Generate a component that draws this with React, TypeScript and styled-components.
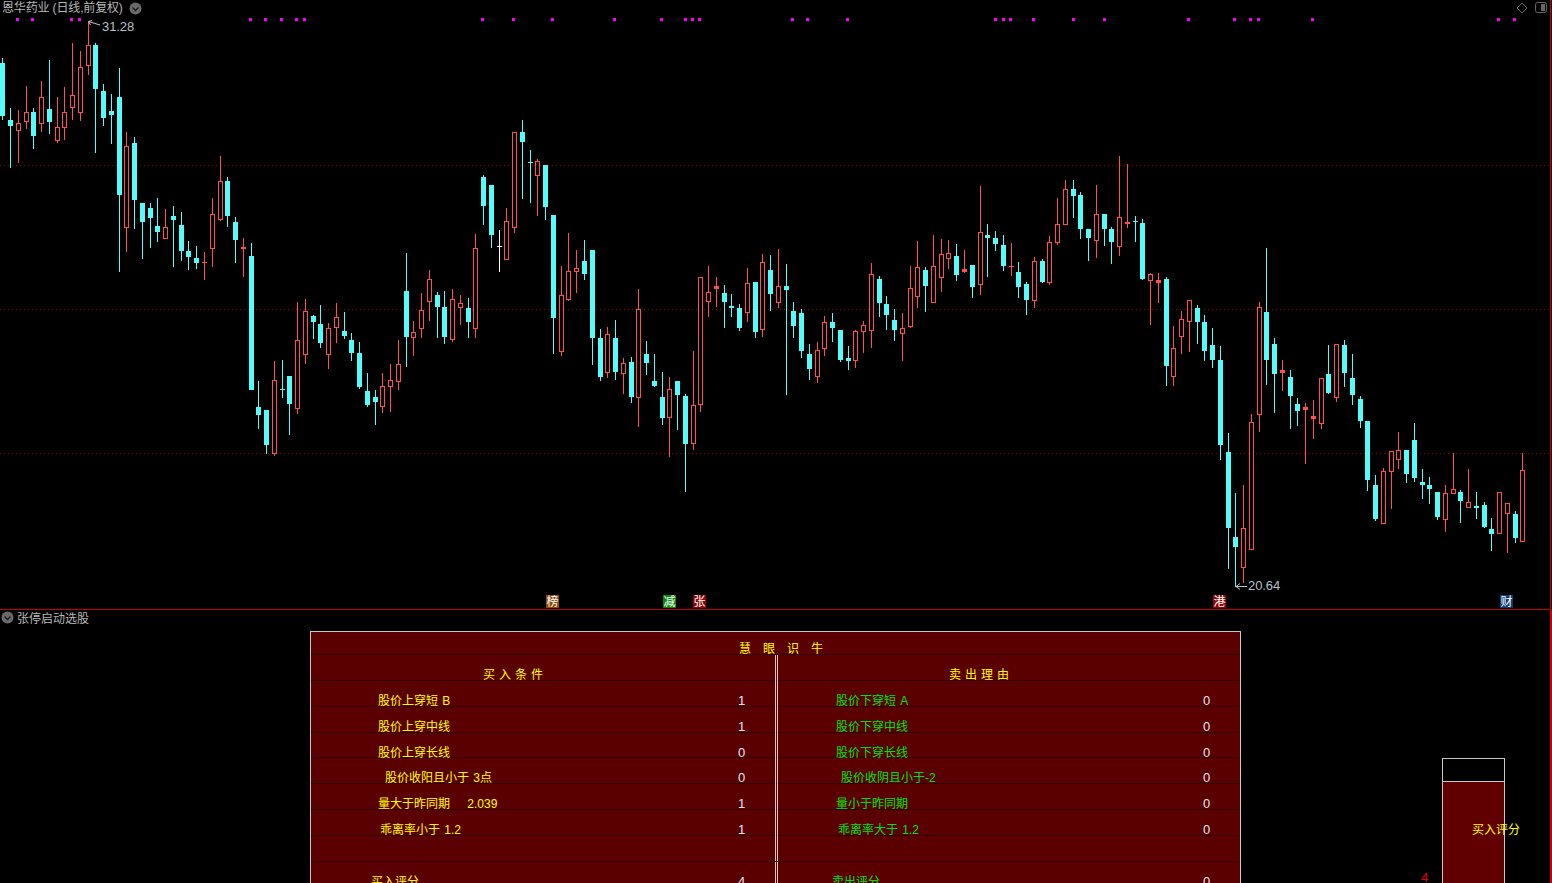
import React from 'react';
import styled, {createGlobalStyle} from 'styled-components';

type Kind = 'c' | 'r' | 'w';
// x, colour, high, body top, body bottom, low (screen pixels)
type CandleData = [number, Kind, number, number, number, number];

const CANDLES: CandleData[] = [
  [2,'c',58,63,116,120],[10,'c',108,120,126,168],[18,'r',110,123,131,163],[26,'r',86,112,122,129],
  [33,'c',108,112,136,149],[41,'r',81,97,124,132],[49,'c',60,109,122,134],[57,'r',97,127,141,143],
  [64,'r',87,112,128,140],[72,'r',43,95,108,120],[80,'r',51,67,113,121],[88,'r',21,45,66,75],
  [95,'c',43,45,89,153],[103,'c',84,91,118,126],[111,'c',94,111,115,144],[119,'c',68,97,195,272],
  [126,'r',132,146,228,252],[134,'c',137,143,200,229],[142,'c',203,203,222,259],[150,'c',203,208,218,248],
  [157,'c',198,226,232,242],[165,'r',209,227,239,239],[173,'c',206,216,220,267],[181,'c',212,225,251,261],
  [188,'c',241,251,257,270],[196,'c',246,258,263,269],[204,'r',252,262,263,280],[212,'r',198,214,249,267],
  [220,'r',156,181,220,221],[227,'c',177,181,216,227],[235,'c',217,222,240,263],[243,'r',238,247,249,277],
  [251,'c',243,256,390,390],[258,'c',381,407,415,429],[266,'c',410,410,445,454],[274,'r',361,380,454,456],
  [282,'c',360,389,390,398],[289,'c',376,376,404,435],[297,'r',302,340,409,414],[305,'r',299,311,355,364],
  [313,'c',315,316,322,339],[320,'c',305,324,343,348],[328,'r',323,328,355,369],[336,'r',303,317,328,343],
  [344,'c',312,331,336,339],[351,'c',333,340,353,361],[359,'c',342,353,387,389],[367,'c',373,391,405,407],
  [375,'c',390,397,402,425],[382,'r',373,386,407,413],[390,'r',364,380,387,412],[398,'r',340,364,382,390],
  [406,'c',253,291,337,367],[413,'r',321,332,338,356],[421,'r',293,310,329,338],[429,'r',270,279,302,321],
  [437,'c',292,295,307,338],[444,'c',291,307,337,344],[452,'r',289,299,340,342],[460,'r',295,303,308,325],
  [468,'c',298,308,322,338],[475,'r',234,248,329,338],[483,'c',175,177,206,225],[491,'c',185,185,235,248],
  [499,'w',230,246,247,272],[506,'r',208,221,260,260],[514,'r',132,132,228,233],[522,'c',120,132,142,199],
  [530,'c',150,162,163,203],[537,'r',159,161,176,216],[545,'c',165,165,207,220],[553,'c',215,215,318,354],
  [561,'r',266,295,352,356],[568,'r',233,271,300,301],[576,'r',250,268,272,293],[584,'c',240,261,274,280],
  [592,'c',250,250,338,365],[600,'c',329,338,377,381],[607,'r',327,334,373,378],[615,'c',320,338,372,380],
  [623,'r',358,363,374,394],[631,'c',357,362,397,403],[638,'r',289,309,398,427],[646,'c',341,354,363,375],
  [654,'c',354,381,386,387],[662,'c',372,397,418,425],[669,'r',377,389,418,457],[677,'c',381,381,395,430],
  [685,'c',394,396,444,492],[693,'r',351,405,444,450],[700,'r',277,277,405,412],[708,'r',266,292,302,317],
  [716,'r',277,286,289,307],[724,'c',285,293,302,328],[731,'c',294,306,308,317],[739,'c',304,308,328,331],
  [747,'r',268,283,313,322],[755,'c',282,282,332,338],[762,'r',254,262,330,337],[770,'c',255,270,294,311],
  [778,'r',249,286,303,308],[786,'c',264,286,290,395],[793,'c',302,311,326,338],[801,'c',309,313,351,358],
  [809,'c',344,354,369,380],[817,'r',342,350,377,383],[824,'r',316,322,349,356],[832,'c',313,322,328,342],
  [840,'c',330,330,360,362],[848,'c',346,358,361,370],[855,'r',330,331,361,368],[863,'r',321,325,332,353],
  [871,'r',263,274,331,348],[879,'c',276,279,303,317],[886,'c',296,304,315,330],[894,'c',309,320,330,341],
  [902,'r',313,328,334,361],[910,'r',266,288,327,328],[917,'r',241,267,297,308],[925,'c',267,270,286,312],
  [933,'r',235,266,303,303],[941,'r',239,254,278,292],[948,'r',240,253,259,269],[956,'c',244,256,275,281],
  [964,'r',250,269,272,273],[972,'c',265,265,287,298],[980,'r',186,232,285,295],[987,'c',224,235,238,277],
  [995,'c',231,238,244,251],[1003,'c',235,245,266,271],[1011,'r',243,266,267,276],[1018,'c',262,272,287,298],
  [1026,'c',282,284,300,315],[1034,'r',257,261,301,308],[1042,'c',259,261,282,283],[1049,'r',236,242,283,285],
  [1057,'r',198,224,243,245],[1065,'r',180,189,225,225],[1073,'c',180,189,196,218],[1080,'c',192,195,229,239],
  [1088,'c',229,229,238,261],[1096,'r',185,214,241,258],[1104,'c',214,214,229,246],[1111,'c',227,229,242,264],
  [1119,'r',156,217,247,256],[1127,'r',164,222,224,228],[1135,'c',216,221,222,242],[1142,'c',219,223,279,280],
  [1150,'r',273,274,281,325],[1158,'r',273,280,283,303],[1166,'c',277,279,366,386],[1173,'r',326,348,377,386],
  [1181,'r',311,319,337,354],[1189,'r',300,300,322,352],[1197,'c',305,308,322,344],[1204,'c',315,322,351,361],
  [1212,'c',328,345,360,368],[1220,'c',346,360,445,460],[1228,'c',433,452,528,569],[1235,'c',493,537,547,587],
  [1243,'r',485,528,568,583],[1251,'r',414,422,550,550],[1259,'r',302,307,415,432],[1266,'c',248,312,360,385],
  [1274,'c',338,344,374,413],[1282,'r',360,370,373,391],[1290,'c',370,377,396,429],[1297,'c',398,404,411,426],
  [1305,'r',403,407,410,464],[1313,'r',400,416,419,439],[1321,'r',378,378,424,429],[1328,'c',345,374,393,394],
  [1336,'r',344,344,398,402],[1344,'c',340,345,373,387],[1352,'c',354,378,395,405],[1360,'c',396,399,421,428],
  [1367,'c',421,421,480,491],[1375,'c',475,485,519,521],[1383,'r',468,471,524,524],[1391,'r',451,451,472,509],
  [1398,'r',432,450,460,469],[1406,'c',450,450,474,483],[1414,'c',423,440,478,482],[1422,'c',469,482,485,499],
  [1429,'c',477,485,489,504],[1437,'c',492,492,517,520],[1445,'r',485,493,520,532],[1453,'r',453,489,494,494],
  [1460,'c',490,492,501,523],[1468,'r',469,502,508,508],[1476,'c',492,506,508,519],[1484,'c',502,505,527,528],
  [1491,'c',518,529,534,551],[1499,'r',492,492,534,534],[1507,'r',503,503,514,553],[1515,'c',511,514,538,543],
  [1522,'r',453,470,542,542],
];

const SIGNAL_DOTS = [
  17, 32, 71, 79, 250, 265, 281, 296, 304, 482, 513, 552, 614, 661, 685, 692, 699, 792, 807, 847,
  995, 1003, 1010, 1033, 1073, 1104, 1188, 1234, 1250, 1258, 1312, 1498, 1514,
];

const GRID_LINES = [165, 309, 453];

const COLORS: Record<Kind, string> = {c: '#54fcfc', r: '#ff4f4f', w: '#ffffff'};

const BADGES = [
  {left: 546, bg: '#8a4a0c', text: '榜'},
  {left: 663, bg: '#0c840c', text: '减'},
  {left: 693, bg: '#8a0606', text: '张'},
  {left: 1213, bg: '#8a0606', text: '港'},
  {left: 1500, bg: '#0c3c70', text: '财'},
];

interface Condition {
  label: string;
  indent: number;
  value: string;
}

const BUY_ROWS: Condition[] = [
  {label: '股价上穿短 B', indent: 67, value: '1'},
  {label: '股价上穿中线', indent: 67, value: '1'},
  {label: '股价上穿长线', indent: 67, value: '0'},
  {label: '股价收阳且小于 3点', indent: 74, value: '0'},
  {label: '量大于昨同期    2.039', indent: 67, value: '1'},
  {label: '乖离率小于 1.2', indent: 69, value: '1'},
  {label: '', indent: 0, value: ''},
  {label: '买入评分', indent: 60, value: '4'},
];

const SELL_ROWS: Condition[] = [
  {label: '股价下穿短 A', indent: 58, value: '0'},
  {label: '股价下穿中线', indent: 58, value: '0'},
  {label: '股价下穿长线', indent: 58, value: '0'},
  {label: '股价收阴且小于-2', indent: 63, value: '0'},
  {label: '量小于昨同期', indent: 58, value: '0'},
  {label: '乖离率大于 1.2', indent: 60, value: '0'},
  {label: '', indent: 0, value: ''},
  {label: '卖出评分', indent: 54, value: '0'},
];

const Candle: React.FC<{data: CandleData}> = ({data}) => {
  const [x, kind, high, top, bottom, low] = data;
  const color = COLORS[kind];
  const thin = bottom - top <= 3;
  const hollow = kind === 'r' && !thin;
  return (
    <g>
      <rect x={x} y={high} width={1} height={Math.max(low - high, 1)} fill={color} />
      {hollow ? (
        <rect x={x - 1.5} y={top + 0.5} width={4} height={bottom - top - 1} fill="#000" stroke={color} />
      ) : (
        <rect x={x - 2} y={top} width={5} height={Math.max(bottom - top, 1)} fill={color} />
      )}
    </g>
  );
};

const Chevron: React.FC = () => (
  <svg width={13} height={13} viewBox="0 0 13 13">
    <circle cx={6.5} cy={6.5} r={6} fill="#6a6a6a" />
    <path d="M3.5 5.5 L6.5 8.5 L9.5 5.5" fill="none" stroke="#1c1c1c" strokeWidth={1.4} />
  </svg>
);

const ConditionCell: React.FC<{row: Condition; $sell?: boolean}> = ({row, $sell}) => (
  <StyledCell $valueAt={$sell ? 425 : 427}>
    <StyledLabel $indent={row.indent} $sell={$sell}>
      {row.label}
    </StyledLabel>
    <StyledValue>{row.value}</StyledValue>
  </StyledCell>
);

const App: React.FC = () => {
  return (
    <StyledPage>
      <GlobalStyle />
      <StyledChartPanel>
        <StyledChartSvg width={1550} height={609} viewBox="0 0 1550 609" shapeRendering="crispEdges">
          {GRID_LINES.map((y) => (
            <line key={y} x1={0} x2={1550} y1={y + 0.5} y2={y + 0.5} stroke="#9a0000" strokeDasharray="1 3" />
          ))}
          {SIGNAL_DOTS.map((x) => (
            <rect key={x} x={x - 1} y={18} width={3} height={3} fill="#ff00ff" />
          ))}
          {CANDLES.map((c) => (
            <Candle key={c[0]} data={c} />
          ))}
          <g fill="none" stroke="#c4c4c4" shapeRendering="auto">
            <path d="M88.5 21.5 L100 25 M88.5 21.5 L92 20.5 M88.5 21.5 L90.5 25" />
            <path d="M1236 586.5 L1247 586.5 M1236 586.5 L1240 583.5 M1236 586.5 L1240 589.5" />
          </g>
          <StyledPriceText x={102} y={31}>31.28</StyledPriceText>
          <StyledPriceText x={1248} y={590}>20.64</StyledPriceText>
        </StyledChartSvg>

        <StyledChartHeader>
          <StyledTitle>恩华药业 (日线,前复权)</StyledTitle>
          <Chevron />
        </StyledChartHeader>

        <StyledCornerIcons>
          <svg width={12} height={12} viewBox="0 0 12 12">
            <path d="M6 1 L11 6 L6 11 L1 6 Z" fill="none" stroke="#666" />
          </svg>
          <svg width={12} height={12} viewBox="0 0 12 12">
            <rect x={0.5} y={0.5} width={11} height={10} rx={2} fill="none" stroke="#666" />
            <rect x={6} y={2} width={4} height={7} fill="#666" />
          </svg>
        </StyledCornerIcons>

        {BADGES.map((b) => (
          <StyledBadge key={b.left} $left={b.left} $bg={b.bg}>
            {b.text}
          </StyledBadge>
        ))}
      </StyledChartPanel>

      <StyledBottomPanel>
        <StyledPanelHeader>
          <Chevron />
          <StyledPanelTitle>张停启动选股</StyledPanelTitle>
        </StyledPanelHeader>
        <StyledBody>
          <StyledTable>
            <StyledTableTitle>慧眼识牛</StyledTableTitle>
            <StyledRow>
              <StyledHeading $pad={172}>买入条件</StyledHeading>
              <StyledDivider />
              <StyledHeading $pad={171}>卖出理由</StyledHeading>
            </StyledRow>
            {BUY_ROWS.map((row, i) => (
              <StyledRow key={i}>
                <ConditionCell row={row} />
                <StyledDivider />
                <ConditionCell row={SELL_ROWS[i]} $sell />
              </StyledRow>
            ))}
          </StyledTable>
          <StyledGauge>
            <StyledGaugeEmpty />
            <StyledGaugeFill />
            <StyledGaugeLabel>买入评分</StyledGaugeLabel>
            <StyledGaugeValue>4</StyledGaugeValue>
          </StyledGauge>
        </StyledBody>
      </StyledBottomPanel>
    </StyledPage>
  );
};

const GlobalStyle = createGlobalStyle`
  html, body {
    margin: 0;
    height: 883px;
    background: #000;
    overflow: hidden;
  }
`;

const FONT = `"Liberation Sans", "Noto Sans CJK SC", sans-serif`;

const StyledPage = styled.div`
  width: 1552px;
  height: 883px;
  display: flex;
  flex-direction: column;
  background: #000;
  font-family: ${FONT};
  font-size: 12px;
  overflow: hidden;
`;

const StyledChartPanel = styled.div`
  position: relative;
  flex: none;
  width: 1551px;
  height: 610px;
  box-sizing: border-box;
  border-bottom: 1px solid #c80000;
  border-right: 1px solid #c80000;
`;

const StyledChartSvg = styled.svg`
  display: block;
`;

const StyledPriceText = styled.text`
  font-family: ${FONT};
  font-size: 13px;
  letter-spacing: -0.1px;
  fill: #b4c0cc;
`;

const StyledChartHeader = styled.div`
  position: absolute;
  left: 2px;
  top: 1px;
  height: 15px;
  display: flex;
  align-items: center;
  gap: 6px;
`;

const StyledTitle = styled.span`
  color: #b8b8b8;
  line-height: 15px;
  letter-spacing: -0.15px;
  white-space: pre;
`;

const StyledCornerIcons = styled.div`
  position: absolute;
  right: 3px;
  top: 2px;
  display: flex;
  gap: 7px;
`;

const StyledBadge = styled.div<{$left: number; $bg: string}>`
  position: absolute;
  left: ${(props) => props.$left}px;
  top: 595px;
  width: 13px;
  height: 13px;
  background: ${(props) => props.$bg};
  color: #fff;
  font-size: 12px;
  line-height: 15px;
  text-align: center;
`;

const StyledBottomPanel = styled.div`
  flex: 1;
  width: 1552px;
  box-sizing: border-box;
  border-right: 2px solid #c80000;
  min-height: 0;
  overflow: hidden;
`;

const StyledPanelHeader = styled.div`
  height: 14px;
  margin-bottom: 7px;
  padding-left: 1px;
  display: flex;
  align-items: center;
  gap: 3px;
`;

const StyledPanelTitle = styled.span`
  color: #b8b8b8;
`;

const StyledBody = styled.div`
  display: flex;
  align-items: flex-start;
  padding-left: 310px;
`;

const StyledTable = styled.div`
  flex: none;
  width: 931px;
  box-sizing: border-box;
  background: #5a0000;
  border: 1px solid #c8c8c8;
  border-bottom: none;
`;

const StyledTableTitle = styled.div`
  height: 23px;
  box-sizing: border-box;
  border-bottom: 1px solid #2c0000;
  padding-left: 428px;
  color: #ffff00;
  letter-spacing: 12px;
  line-height: 34px;
  white-space: nowrap;
`;

const StyledRow = styled.div`
  display: grid;
  grid-template-columns: 464px 3px 1fr;
  height: 25.86px;
  box-sizing: border-box;
  border-bottom: 1px solid #2c0000;
`;

const StyledHeading = styled.div<{$pad: number}>`
  padding-left: ${(props) => props.$pad}px;
  color: #ffff00;
  letter-spacing: 4px;
  line-height: 40px;
  white-space: nowrap;
`;

const StyledDivider = styled.div`
  border-left: 1px solid #d8c4c4;
  border-right: 1px solid #d8c4c4;
`;

const StyledCell = styled.div<{$valueAt: number}>`
  display: grid;
  grid-template-columns: ${(props) => props.$valueAt}px 1fr;
  line-height: 40px;
  word-spacing: 1px;
  white-space: pre;
`;

const StyledLabel = styled.span<{$indent: number; $sell?: boolean}>`
  padding-left: ${(props) => props.$indent}px;
  color: ${(props) => (props.$sell ? '#00e400' : '#ffff00')};
`;

const StyledValue = styled.span`
  color: #e4e4f4;
  font-size: 13px;
`;

const StyledGauge = styled.div`
  position: relative;
  flex: none;
  width: 63px;
  margin-left: 201px;
  margin-top: 127px;
  box-sizing: border-box;
  border: 1px solid #c8c8c8;
  border-bottom: none;
`;

const StyledGaugeEmpty = styled.div`
  height: 22px;
  border-bottom: 1px solid #c8c8c8;
`;

const StyledGaugeFill = styled.div`
  height: 110px;
  background: #600000;
`;

const StyledGaugeLabel = styled.span`
  position: absolute;
  left: 29px;
  top: 61px;
  color: #ffff00;
  white-space: nowrap;
`;

const StyledGaugeValue = styled.span`
  position: absolute;
  left: -22px;
  top: 111px;
  color: #e00000;
  font-size: 13px;
`;

export default App;
